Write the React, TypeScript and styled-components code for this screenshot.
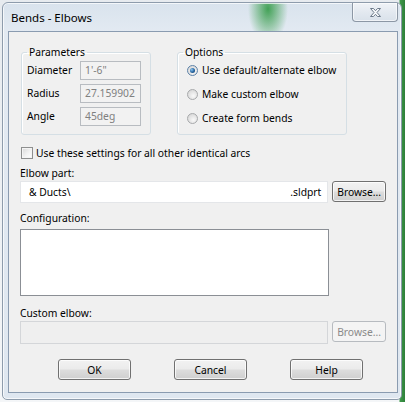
import styled, { createGlobalStyle } from "styled-components";
import { FC } from "react";

const GlobalStyle = createGlobalStyle`
  html, body {
    margin: 0;
    padding: 0;
  }
  body {
    font-family: "Noto Sans", "DejaVu Sans", sans-serif;
    font-size: 10px;
    color: #000000;
  }
`;

const Desktop = styled.div`
  width: 405px;
  height: 402px;
  box-sizing: border-box;
  padding: 2px 3px 2px 2px;
  overflow: hidden;
  background:
    linear-gradient(90deg, transparent 0, transparent 399px, #3f9a4a 400px, #2e7f3a 405px),
    linear-gradient(180deg, #e7ebef 0, #f4f6f8 100%);
`;

const Window = styled.div`
  height: 100%;
  box-sizing: border-box;
  display: flex;
  flex-direction: column;
  border: 1px solid #8e9cac;
  border-radius: 6px 6px 5px 5px;
  padding: 0 3px 6px 5px;
  background:
    radial-gradient(ellipse 20px 34px at 265px 6px, rgba(40, 150, 60, 0.85), rgba(40, 150, 60, 0) 100%),
    linear-gradient(180deg, #d9e3ed 0, #e3eaf2 30px, #dfe7f0 100%);
  box-shadow: inset 0 0 0 1px rgba(255, 255, 255, 0.7);
`;

const TitleBar = styled.div`
  height: 28px;
  display: flex;
  align-items: flex-start;
  justify-content: space-between;
`;

const TitleText = styled.div`
  font-size: 11.5px;
  padding: 7px 0 0 3px;
  color: #000000;
`;

const CloseButton = styled.div`
  width: 46px;
  height: 19px;
  box-sizing: border-box;
  border: 1px solid #8c97a5;
  border-top: none;
  border-radius: 0 0 4px 4px;
  background: linear-gradient(180deg, #f0f3f7 0, #e3e9f0 50%, #d9e1ea 100%);
  box-shadow: inset 0 0 0 1px rgba(255, 255, 255, 0.6);
  display: flex;
  align-items: center;
  justify-content: center;
`;

const Client = styled.div`
  flex: 1;
  border: 1px solid #8a9bb0;
  background: #f0f0f0;
  padding: 13px 11px 0 11px;
  display: flex;
  flex-direction: column;
`;

const GroupRow = styled.div`
  display: flex;
  gap: 26px;
  padding-left: 1px;
`;

interface IGroup {
  width: number;
}

const Group = styled.fieldset<IGroup>`
  width: ${({ width }) => width}px;
  height: 90px;
  box-sizing: border-box;
  margin: 0;
  padding: 0;
  border: 1px solid #d5dfe5;
  border-radius: 3px;
  box-shadow: 1px 1px 0 #ffffff inset;
`;

const GroupLegend = styled.legend`
  margin-left: 5px;
  padding: 0 2px;
  line-height: 14px;
  font-size: 10.3px;
`;

const ParamGrid = styled.div`
  display: grid;
  grid-template-columns: 53px 61px;
  row-gap: 4px;
  align-items: center;
  padding: 2px 0 0 5px;
`;

const ParamLabel = styled.div`
  font-size: 10.3px;
  line-height: 19px;
`;

const ParamInput = styled.div`
  height: 19px;
  box-sizing: border-box;
  border: 1px solid #b8bcc1;
  background: #f2f2f2;
  color: #808080;
  font-size: 10.3px;
  line-height: 17px;
  padding-left: 4px;
  white-space: nowrap;
  overflow: hidden;
`;

const RadioList = styled.div`
  display: flex;
  flex-direction: column;
  gap: 8px;
  padding: 3px 0 0 9px;
`;

const RadioRow = styled.div`
  display: flex;
  align-items: center;
  gap: 4px;
  height: 16px;
  font-size: 10.3px;
`;

interface IRadio {
  checked?: boolean;
}

const RadioCircle = styled.span<IRadio>`
  width: 11px;
  height: 11px;
  box-sizing: border-box;
  border-radius: 50%;
  border: 1px solid ${({ checked }) => (checked ? "#5d82a8" : "#a7a9ab")};
  background: radial-gradient(circle at 60% 65%, #f9f9f9 0, #dcdcdc 70%, #cfcfcf 100%);
  display: flex;
  align-items: center;
  justify-content: center;

  &::after {
    content: "";
    display: ${({ checked }) => (checked ? "block" : "none")};
    width: 5px;
    height: 5px;
    border-radius: 50%;
    background: radial-gradient(circle at 35% 35%, #8cc6f0 0, #2b6aa6 50%, #0c355f 100%);
  }
`;

const CheckRow = styled.div`
  display: flex;
  align-items: center;
  gap: 3px;
  margin: 11px 0 0 1px;
  font-size: 10.3px;
  height: 13px;
`;

const CheckBox = styled.span`
  width: 12px;
  height: 12px;
  box-sizing: border-box;
  border: 1px solid #8e8f8f;
  background: linear-gradient(135deg, #d8d8d8 0, #f4f4f4 60%, #ffffff 100%);
  box-shadow: inset 0 0 0 1px #f4f4f4;
`;

interface IFieldLabel {
  top: number;
}

const FieldLabel = styled.div<IFieldLabel>`
  margin-top: ${({ top }) => top}px;
  font-size: 10.3px;
  line-height: 14px;
`;

const FieldRow = styled.div`
  display: flex;
  align-items: flex-start;
  gap: 4px;
  margin-top: 1px;
`;

const PathInput = styled.div`
  width: 310px;
  height: 22px;
  box-sizing: border-box;
  border: 1px solid #e4e6e9;
  background: #ffffff;
  display: flex;
  align-items: center;
  justify-content: space-between;
  padding: 0 6px 0 8px;
  font-size: 10.3px;
`;

const DisabledInput = styled.div`
  width: 309px;
  height: 23px;
  box-sizing: border-box;
  border: 1px solid #d4d6d9;
  background: #efefef;
`;

const ListBox = styled.div`
  width: 309px;
  height: 67px;
  box-sizing: border-box;
  border: 1px solid #8b8f95;
  background: #ffffff;
  margin-top: 4px;
`;

interface IButton {
  disabled?: boolean;
  width: number;
}

const Button = styled.button<IButton>`
  width: ${({ width }) => width}px;
  height: 21px;
  box-sizing: border-box;
  padding: 0;
  font-family: "Noto Sans", "DejaVu Sans", sans-serif;
  font-size: 10.3px;
  border-radius: 3px;
  border: 1px solid ${({ disabled }) => (disabled ? "#b7bbc0" : "#707070")};
  color: ${({ disabled }) => (disabled ? "#8a8a8a" : "#000000")};
  background: ${({ disabled }) =>
    disabled
      ? "#f4f4f4"
      : "linear-gradient(180deg, #f2f2f2 0, #ebebeb 48%, #dddddd 52%, #cfcfcf 100%)"};
  box-shadow: inset 0 0 0 1px ${({ disabled }) => (disabled ? "#f4f4f4" : "rgba(255, 255, 255, 0.75)")};
`;

const ButtonRow = styled.div`
  display: flex;
  gap: 43px;
  padding-left: 38px;
  margin-top: 15px;
`;

const CloseGlyph: FC = () => (
  <svg width="13" height="11" viewBox="0 0 13 11">
    <path
      d="M1.5 1.5 L4.5 1.5 L6.5 3.7 L8.5 1.5 L11.5 1.5 L8 5.5 L11.5 9.5 L8.5 9.5 L6.5 7.3 L4.5 9.5 L1.5 9.5 L5 5.5 Z"
      fill="#f7f9fb"
      stroke="#6c7a8a"
      strokeWidth="1"
      strokeLinejoin="round"
    />
  </svg>
);

const params = [
  { label: "Diameter", value: "1'-6\"" },
  { label: "Radius", value: "27.159902" },
  { label: "Angle", value: "45deg" },
];

const options = [
  { label: "Use default/alternate elbow", checked: true },
  { label: "Make custom elbow", checked: false },
  { label: "Create form bends", checked: false },
];

export default function App() {
  return (
    <>
      <GlobalStyle />
      <Desktop>
        <Window>
          <TitleBar>
            <TitleText>Bends - Elbows</TitleText>
            <CloseButton>
              <CloseGlyph />
            </CloseButton>
          </TitleBar>
          <Client>
            <GroupRow>
              <Group width={130}>
                <GroupLegend>Parameters</GroupLegend>
                <ParamGrid>
                  {params.map((p) => [
                    <ParamLabel key={p.label}>{p.label}</ParamLabel>,
                    <ParamInput key={p.label + "-v"}>{p.value}</ParamInput>,
                  ])}
                </ParamGrid>
              </Group>
              <Group width={170}>
                <GroupLegend>Options</GroupLegend>
                <RadioList>
                  {options.map((o) => (
                    <RadioRow key={o.label}>
                      <RadioCircle checked={o.checked} />
                      {o.label}
                    </RadioRow>
                  ))}
                </RadioList>
              </Group>
            </GroupRow>
            <CheckRow>
              <CheckBox />
              Use these settings for all other identical arcs
            </CheckRow>
            <FieldLabel top={7}>Elbow part:</FieldLabel>
            <FieldRow>
              <PathInput>
                <span>&amp; Ducts\</span>
                <span>.sldprt</span>
              </PathInput>
              <Button width={54}>Browse...</Button>
            </FieldRow>
            <FieldLabel top={8}>Configuration:</FieldLabel>
            <ListBox />
            <FieldLabel top={10}>Custom elbow:</FieldLabel>
            <FieldRow>
              <DisabledInput />
              <Button width={54} disabled>
                Browse...
              </Button>
            </FieldRow>
            <ButtonRow>
              <Button width={73}>OK</Button>
              <Button width={73}>Cancel</Button>
              <Button width={73}>Help</Button>
            </ButtonRow>
          </Client>
        </Window>
      </Desktop>
    </>
  );
}
